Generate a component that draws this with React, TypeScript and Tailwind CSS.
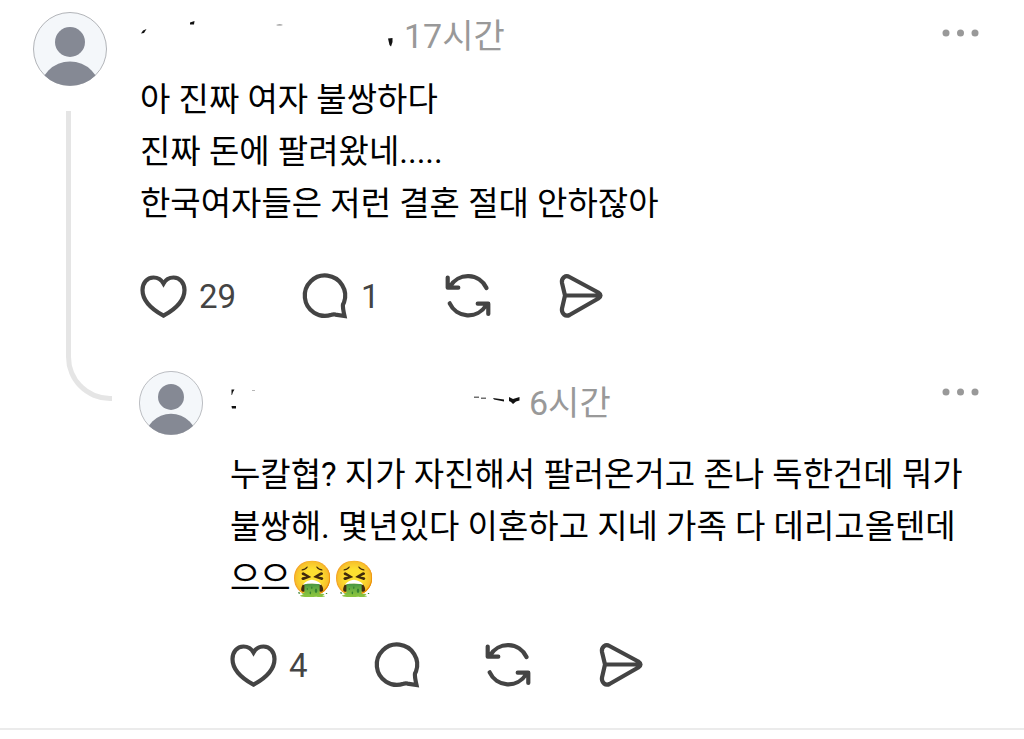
import type { ReactNode } from "react";

type Post = {
  time: string;
  lines: string[];
  emoji?: string;
  likes?: number;
  replies?: number;
};

const post: Post = {
  time: "17시간",
  lines: ["아 진짜 여자 불쌍하다", "진짜 돈에 팔려왔네.....", "한국여자들은 저런 결혼 절대 안하잖아"],
  likes: 29,
  replies: 1,
};

const reply: Post = {
  time: "6시간",
  lines: [
    "누칼협? 지가 자진해서 팔러온거고 존나 독한건데 뭐가",
    "불쌍해. 몇년있다 이혼하고 지네 가족 다 데리고올텐데",
    "으으",
  ],
  emoji: "🤮🤮",
  likes: 4,
};

function Avatar({ className }: { className: string }) {
  return (
    <svg viewBox="0 0 74 74" className={`shrink-0 ${className}`} role="img" aria-label="프로필">
      <clipPath id="avatar-clip">
        <circle cx="37" cy="37" r="36.8" />
      </clipPath>
      <circle cx="37" cy="37" r="36.5" fill="#f4f7fa" stroke="#a9abb0" strokeWidth="0.9" />
      <g fill="#858994" clipPath="url(#avatar-clip)">
        <circle cx="37" cy="30" r="15" />
        <circle cx="37" cy="80" r="30.5" />
      </g>
    </svg>
  );
}

function Icon({ children }: { children: ReactNode }) {
  return (
    <svg
      viewBox="0 0 46 46"
      className="size-[46px] shrink-0 overflow-visible"
      fill="none"
      stroke="currentColor"
      strokeWidth="4.2"
      strokeLinecap="round"
      strokeLinejoin="round"
      aria-hidden="true"
    >
      {children}
    </svg>
  );
}

function Action({ label, count, children }: { label: string; count?: number; children: ReactNode }) {
  return (
    <button type="button" aria-label={label} className="flex items-center gap-[13px]">
      <Icon>{children}</Icon>
      {count !== undefined && <span className="leading-10">{count}</span>}
    </button>
  );
}

function Actions({ likes, replies }: Post) {
  return (
    <div className="flex gap-[66px] text-[#444]">
      <Action label="좋아요" count={likes}>
        <path
          strokeLinejoin="miter"
          d="M23.5 9.5C21 5 17 3.5 13.5 3.5C7 3.5 2.5 9 2.5 16C2.5 27 13 36 23.5 41.7C34 36 44.5 27 44.5 16C44.5 9 40 3.5 33.5 3.5C30 3.5 26 5 23.5 9.5Z"
        />
      </Action>
      <Action label="답글" count={replies}>
        <path
          strokeLinejoin="miter"
          d="M41 30.5Q40.5 33 42.5 42L33.5 40.6Q31.5 40 29.5 40.8A20.2 20.2 0 1 1 42 28.5Z"
        />
      </Action>
      <Action label="리포스트">
        <path d="M4 12.5A20.6 20.6 0 0 1 40.5 14M1.7 3.5V13.7H12.3M3.7 29.3A20.6 20.6 0 0 0 40 31.5M31.7 29.7H42.3V40" />
      </Action>
      <Action label="공유">
        <path d="M11.5 3L40.3 18.5Q44.8 21.5 40.3 24.5L11.5 41Q8.5 42.5 6 40.5Q3.3 38 4 34.5L7 21.5L4 9Q3.3 5.5 6 3.2Q8.5 1.4 11.5 3ZM7 21.5H42" />
      </Action>
    </div>
  );
}

function MoreButton() {
  return (
    <button type="button" aria-label="더 보기" className="flex h-[42px] items-center self-start">
      <svg viewBox="0 0 37 8" className="h-2 w-[37px]" fill="#999">
        <circle cx="4" cy="4" r="3.5" />
        <circle cx="18.5" cy="4" r="3.5" />
        <circle cx="33" cy="4" r="3.5" />
      </svg>
    </button>
  );
}

function Body({ lines, emoji }: Post) {
  return (
    <p className="leading-[52px] text-black">
      {lines.map((line, i) => (
        <span key={line} className="block">
          {line}
          {emoji && i === lines.length - 1 && <span className="text-[34px] leading-none">{emoji}</span>}
        </span>
      ))}
    </p>
  );
}

export default function App() {
  return (
    <main className="border-b-2 border-[#ebebeb] bg-white pt-3 pr-[45px] pb-[39px] pl-[33px] font-[Roboto,'Noto_Sans_CJK_KR',sans-serif] text-[33px]">
      <article className="flex gap-[33px]">
        <div className="flex w-[74px] shrink-0 flex-col">
          <Avatar className="size-[74px]" />
          {/* thread line down to the reply */}
          <div className="-mb-[30px] mt-[25px] ml-[33px] w-[46px] flex-1 rounded-bl-[44px] border-b-[5px] border-l-[5px] border-[#e5e5e5]" />
        </div>
        <div className="min-w-0 flex-1 pb-[51px]">
          <header className="mb-[14px] flex h-12 items-center">
            {/* what is left of the erased name */}
            <svg viewBox="0 0 264 48" className="h-12 w-[264px]" fill="#111" aria-hidden="true">
              <path d="M1 21.5L3 18.5L6.5 17L4 21Z" />
              <path d="M50 10.5L54.5 9L54 12.5H50Z" />
              <path d="M136 13Q140 11.5 143 13Q139 14.2 136 13Z" opacity="0.5" />
              <path d="M248 26.5L252.5 26V30L251 34.5L249.5 33Z" />
            </svg>
            <time className="text-[34px] text-[#999]">{post.time}</time>
            <span className="flex-1" />
            <MoreButton />
          </header>
          <Body {...post} />
          <div className="mt-[44px]">
            <Actions {...post} />
          </div>
        </div>
      </article>

      <article className="ml-[106px] flex gap-[27px]">
        <Avatar className="size-[64px]" />
        <div className="min-w-0 flex-1">
          <header className="mb-[14px] flex h-16 items-center">
            <svg viewBox="0 0 299 64" className="h-16 w-[299px]" fill="#111" aria-hidden="true">
              <path d="M1.5 18.5H4.5L3 21L2 24H1.5Z" />
              <path d="M1.5 35H6V37.5H2Z" />
              <path d="M22 19H25V20H22Z" opacity="0.3" />
              <path d="M244 25.5H249V27H244ZM251 26.5H256V28H251Z" opacity="0.6" />
              <path d="M263 27L274 28.5V30.5L264 28.5Z" />
              <path d="M279 26L283 28L289.5 26V29.5L286 30.5L283 33L281 31L279 30Z" />
            </svg>
            <time className="text-[34px] text-[#999]">{reply.time}</time>
            <span className="flex-1" />
            <MoreButton />
          </header>
          <Body {...reply} />
          <div className="mt-[38px]">
            <Actions {...reply} />
          </div>
        </div>
      </article>
    </main>
  );
}
